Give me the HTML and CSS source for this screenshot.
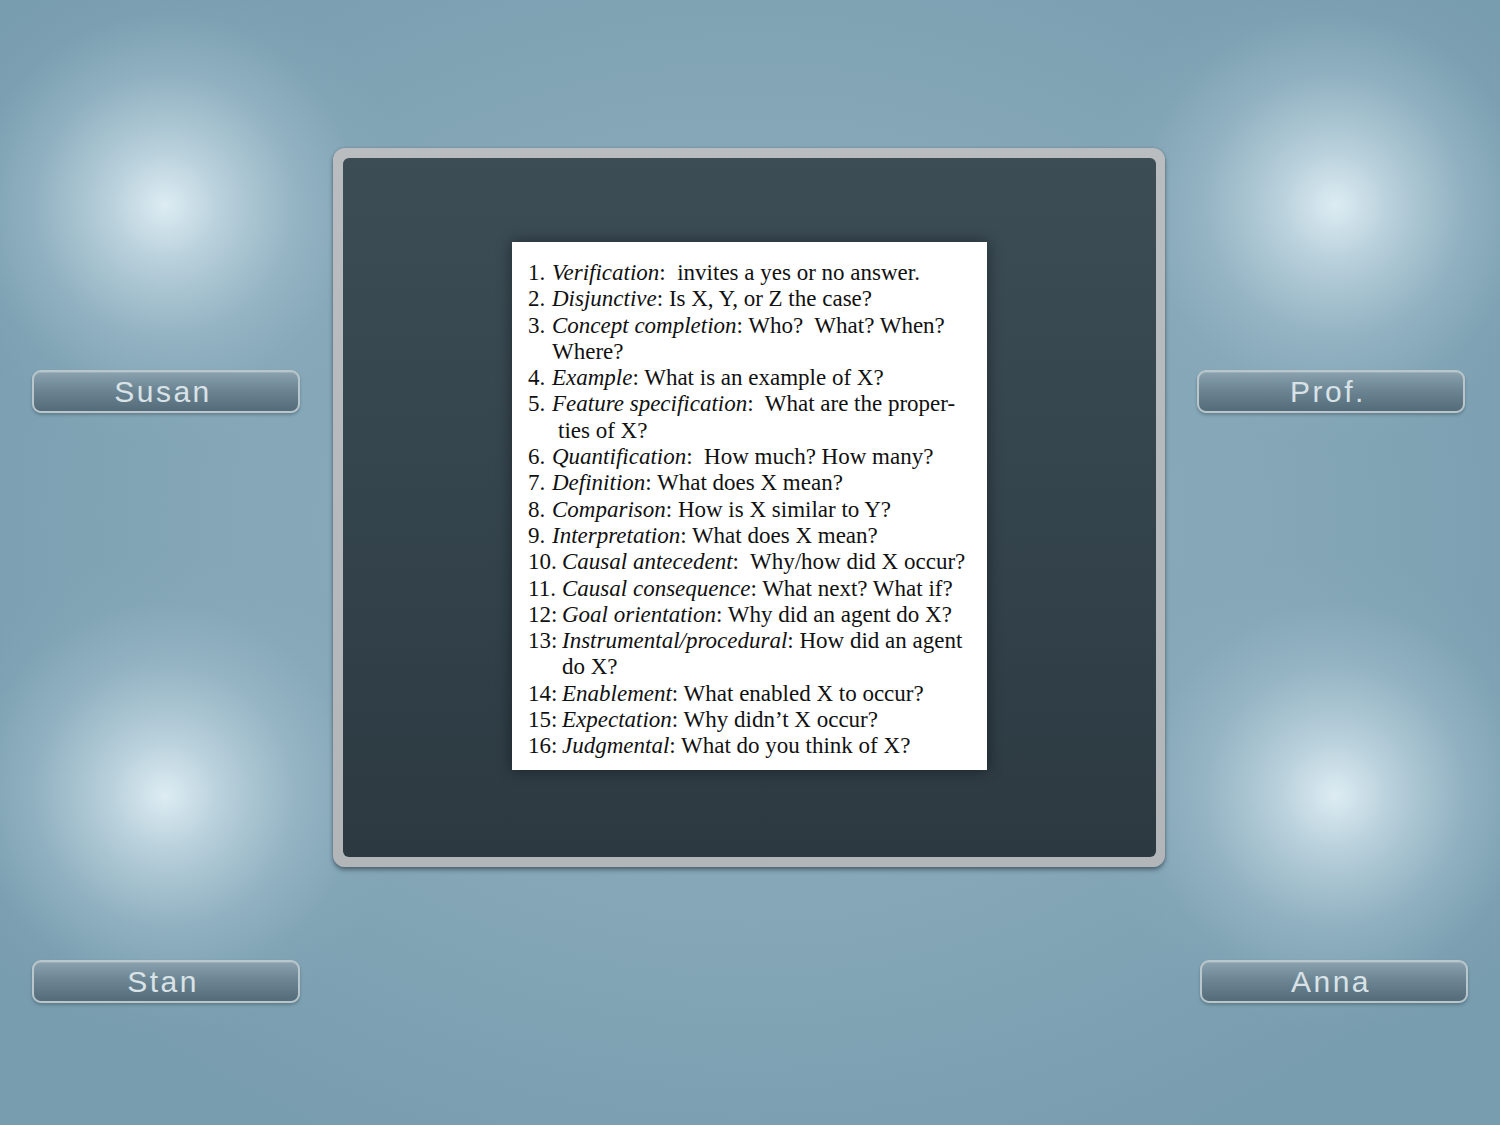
FILE: index.html
```html
<!DOCTYPE html>
<html lang="en">
<head>
<meta charset="utf-8">
<title>Question taxonomy</title>
<link rel="stylesheet" href="styles.css">
</head>
<body>
<div class="scene">
  <div class="side side-left">
    <div class="seat"><button class="name-btn">Susan</button></div>
    <div class="seat"><button class="name-btn">Stan</button></div>
  </div>

  <div class="board">
    <div class="board-inner">
      <div class="paper">
        <div class="item"><span class="num">1.</span><span class="txt"><i>Verification</i>:&nbsp; invites a yes or no answer.</span></div>
        <div class="item"><span class="num">2.</span><span class="txt"><i>Disjunctive</i>: Is X, Y, or Z the case?</span></div>
        <div class="item"><span class="num">3.</span><span class="txt"><i>Concept completion</i>: Who?&nbsp; What? When?<br>Where?</span></div>
        <div class="item"><span class="num">4.</span><span class="txt"><i>Example</i>: What is an example of X?</span></div>
        <div class="item"><span class="num">5.</span><span class="txt"><i>Feature specification</i>:&nbsp; What are the proper-<br><span class="nudge">ties of X?</span></span></div>
        <div class="item"><span class="num">6.</span><span class="txt"><i>Quantification</i>:&nbsp; How much? How many?</span></div>
        <div class="item"><span class="num">7.</span><span class="txt"><i>Definition</i>: What does X mean?</span></div>
        <div class="item"><span class="num">8.</span><span class="txt"><i>Comparison</i>: How is X similar to Y?</span></div>
        <div class="item"><span class="num">9.</span><span class="txt"><i>Interpretation</i>: What does X mean?</span></div>
        <div class="item wide"><span class="num">10.</span><span class="txt"><i>Causal antecedent</i>:&nbsp; Why/how did X occur?</span></div>
        <div class="item wide"><span class="num">11.</span><span class="txt"><i>Causal consequence</i>: What next? What if?</span></div>
        <div class="item wide"><span class="num">12:</span><span class="txt"><i>Goal orientation</i>: Why did an agent do X?</span></div>
        <div class="item wide"><span class="num">13:</span><span class="txt"><i>Instrumental/procedural</i>: How did an agent<br>do X?</span></div>
        <div class="item wide"><span class="num">14:</span><span class="txt"><i>Enablement</i>: What enabled X to occur?</span></div>
        <div class="item wide"><span class="num">15:</span><span class="txt"><i>Expectation</i>: Why didn’t X occur?</span></div>
        <div class="item wide"><span class="num">16:</span><span class="txt"><i>Judgmental</i>: What do you think of X?</span></div>
      </div>
    </div>
  </div>

  <div class="side side-right">
    <div class="seat"><button class="name-btn">Prof.</button></div>
    <div class="seat seat-shift"><button class="name-btn">Anna</button></div>
  </div>
</div>
</body>
</html>
```

FILE: styles.css
```css
html, body {
  margin: 0;
  padding: 0;
  width: 1500px;
  height: 1125px;
  overflow: hidden;
}

body {
  background:
    radial-gradient(circle 240px at 165px 205px, rgba(226, 240, 246, 0.95) 0%, rgba(205, 225, 234, 0.7) 25%, rgba(175, 202, 215, 0.4) 55%, rgba(150, 182, 198, 0.12) 80%, rgba(140, 175, 192, 0) 100%),
    radial-gradient(circle 240px at 1335px 205px, rgba(226, 240, 246, 0.95) 0%, rgba(205, 225, 234, 0.7) 25%, rgba(175, 202, 215, 0.4) 55%, rgba(150, 182, 198, 0.12) 80%, rgba(140, 175, 192, 0) 100%),
    radial-gradient(circle 240px at 165px 795px, rgba(226, 240, 246, 0.95) 0%, rgba(205, 225, 234, 0.7) 25%, rgba(175, 202, 215, 0.4) 55%, rgba(150, 182, 198, 0.12) 80%, rgba(140, 175, 192, 0) 100%),
    radial-gradient(circle 240px at 1335px 795px, rgba(226, 240, 246, 0.95) 0%, rgba(205, 225, 234, 0.7) 25%, rgba(175, 202, 215, 0.4) 55%, rgba(150, 182, 198, 0.12) 80%, rgba(140, 175, 192, 0) 100%),
    radial-gradient(ellipse 900px 700px at 750px 520px, #8eaebe 0%, #84a6b7 60%, #789daf 100%);
  font-family: "Liberation Sans", Arial, sans-serif;
}

.scene {
  display: flex;
  align-items: flex-start;
  height: 1125px;
}

.side {
  display: flex;
  flex-direction: column;
  gap: 547px;
  padding-top: 370px;
  box-sizing: border-box;
}

.side-left {
  width: 333px;
  padding-left: 32px;
}

.side-right {
  width: 335px;
  padding-left: 32px;
}

.seat-shift {
  margin-left: 3px;
}

.name-btn {
  display: block;
  width: 268px;
  height: 43px;
  box-sizing: border-box;
  border: 2px solid #b9c6cc;
  border-radius: 9px;
  background: linear-gradient(to bottom, #8aa2ae 0%, #6d8694 45%, #546c7a 100%);
  box-shadow: 0 2px 3px rgba(40, 60, 70, 0.35), inset 0 1px 0 rgba(255, 255, 255, 0.15);
  color: #d9e2e6;
  font-family: "Liberation Sans", Arial, sans-serif;
  font-size: 30px;
  letter-spacing: 2.5px;
  line-height: 38px;
  padding: 0 6px 0 0;
  text-align: center;
  cursor: pointer;
}

.board {
  width: 832px;
  height: 719px;
  margin-top: 148px;
  box-sizing: border-box;
  padding: 10px 9px 10px 10px;
  border-radius: 12px;
  background: linear-gradient(to bottom, #b9bdbf 0%, #b2b6b8 100%);
  box-shadow: 0 3px 4px rgba(40, 55, 65, 0.55), 0 0 2px rgba(60, 80, 90, 0.4);
  display: flex;
}

.board-inner {
  flex: 1;
  border-radius: 6px;
  background: linear-gradient(to bottom, #3c4d56 0%, #34444d 50%, #2c3941 100%);
  display: flex;
  justify-content: center;
  align-items: flex-start;
  padding-top: 84px;
}

.paper {
  width: 475px;
  height: 528px;
  box-sizing: border-box;
  background: #ffffff;
  padding: 18px 0 0 16px;
  box-shadow: 0 0 14px rgba(0, 0, 0, 0.45);
  font-family: "Liberation Serif", "Times New Roman", serif;
  font-size: 23px;
  line-height: 26.3px;
  color: #111;
  white-space: nowrap;
}

.item {
  display: flex;
}

.num {
  flex: 0 0 24px;
}

.item.wide .num {
  flex-basis: 34px;
}

.nudge {
  margin-left: 6px;
}
```
